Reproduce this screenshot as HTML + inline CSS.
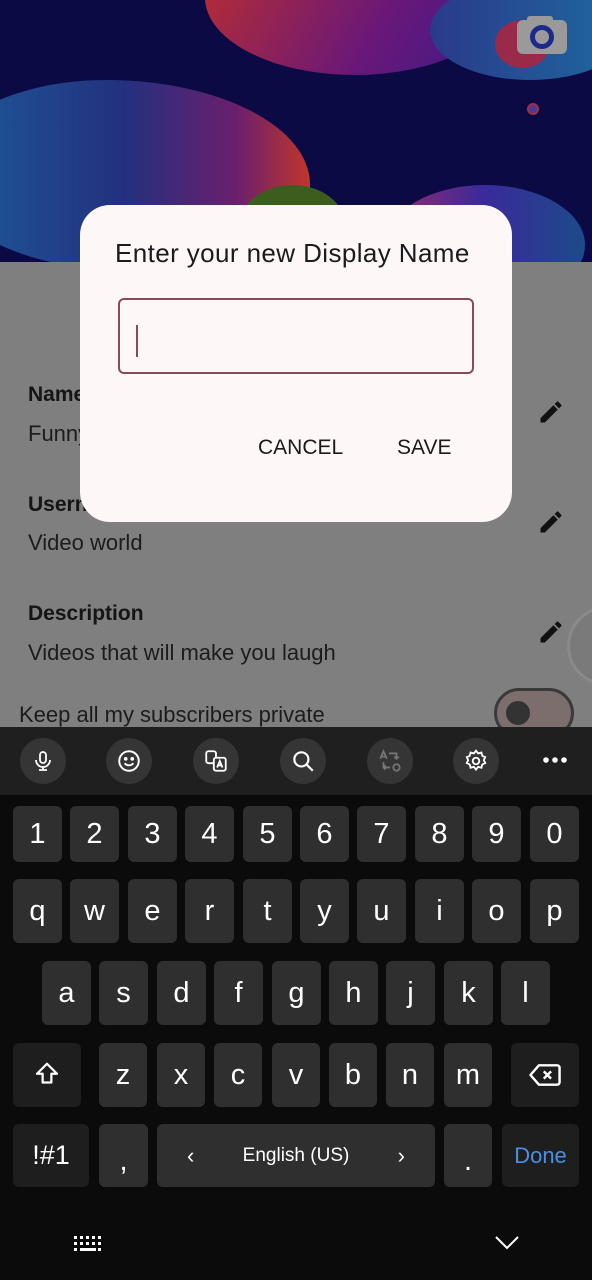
<!DOCTYPE html>
<html><head><meta charset="utf-8"><style>
*{margin:0;padding:0;box-sizing:border-box}
body{width:592px;height:1280px;position:relative;overflow:hidden;background:#7f7f7f;font-family:"Liberation Sans",Roboto,sans-serif}
.a{position:absolute}
.lbl{position:absolute;left:28px;font-size:21px;color:#151515;font-weight:bold}
.val{position:absolute;left:28px;font-size:22px;color:#1c1c1c}
.k{position:absolute;background:#2f2f2f;border-radius:6px;color:#fff;font-size:29px;display:flex;align-items:center;justify-content:center;height:56px}
.f{background:#1e1e1e}
.tb{position:absolute;top:738px;width:46px;height:46px;border-radius:50%;background:#353535;display:flex;align-items:center;justify-content:center}
</style></head><body>
<div class="a" style="left:0;top:0;width:592px;height:262px;background:#0b0a45;overflow:hidden">
 <div class="a" style="left:-60px;top:80px;width:370px;height:190px;border-radius:45% 55% 40% 50%;background:linear-gradient(90deg,#1d5c9a,#23307e 50%,#6a1f6e 80%,#c0362a)"></div>
 <div class="a" style="left:205px;top:-60px;width:120px;height:90px;border-radius:50%;background:linear-gradient(90deg,#2a5a8a,#b03040)"></div>
 <div class="a" style="left:205px;top:-80px;width:300px;height:155px;border-radius:50%;background:linear-gradient(120deg,#c0302a,#6a1878 60%,#3a1a8a)"></div>
 <div class="a" style="left:430px;top:-20px;width:200px;height:100px;border-radius:50%;background:linear-gradient(90deg,#2a3a8a,#1d6aa0)"></div>
 <div class="a" style="left:495px;top:20px;width:55px;height:48px;border-radius:50%;background:#9a2a4a"></div>
 <div class="a" style="left:240px;top:185px;width:105px;height:80px;border-radius:50%;background:#3b5e1e"></div>
 <div class="a" style="left:385px;top:185px;width:200px;height:120px;border-radius:50%;background:linear-gradient(90deg,#9a2a6a,#3a2a9a,#1d4a8a)"></div>
 <div class="a" style="left:527px;top:103px;width:12px;height:12px;border-radius:50%;background:#4a3a9a;border:2px solid #a03040"></div>
 <div class="a" style="left:517px;top:20px;width:50px;height:34px;border-radius:6px;background:#9a9a9a"></div>
 <div class="a" style="left:527px;top:16px;width:26px;height:8px;border-radius:3px;background:#9a9a9a"></div>
 <div class="a" style="left:530px;top:25px;width:24px;height:24px;border-radius:50%;border:5px solid #1e2a8a;background:#9a9a9a"></div>
</div>
<div class="lbl" style="top:383px">Name</div><div class="val" style="top:421px">Funny</div>
<div class="lbl" style="top:493px">Username</div><div class="val" style="top:530px">Video world</div>
<div class="lbl" style="top:602px">Description</div><div class="val" style="top:640px">Videos that will make you laugh</div>
<div class="val" style="left:19px;top:702px">Keep all my subscribers private</div>
<svg class="a" style="left:537px;top:398px" width="28" height="28" viewBox="0 0 24 24"><path fill="#111" d="M3 17.25V21h3.75L17.8 9.94l-3.75-3.75L3 17.25zM20.7 7.04a1 1 0 000-1.41l-2.34-2.34a1 1 0 00-1.41 0l-1.83 1.83 3.75 3.75 1.83-1.83z"/></svg>
<svg class="a" style="left:537px;top:508px" width="28" height="28" viewBox="0 0 24 24"><path fill="#111" d="M3 17.25V21h3.75L17.8 9.94l-3.75-3.75L3 17.25zM20.7 7.04a1 1 0 000-1.41l-2.34-2.34a1 1 0 00-1.41 0l-1.83 1.83 3.75 3.75 1.83-1.83z"/></svg>
<svg class="a" style="left:537px;top:618px" width="28" height="28" viewBox="0 0 24 24"><path fill="#111" d="M3 17.25V21h3.75L17.8 9.94l-3.75-3.75L3 17.25zM20.7 7.04a1 1 0 000-1.41l-2.34-2.34a1 1 0 00-1.41 0l-1.83 1.83 3.75 3.75 1.83-1.83z"/></svg>
<div class="a" style="left:567px;top:606px;width:80px;height:80px;border-radius:50%;background:#7a7a7a;border:3px solid #8a8a8a"></div>
<div class="a" style="left:494px;top:688px;width:80px;height:50px;border-radius:25px;background:#7d6e6e;border:3px solid #3a3a3a"></div>
<div class="a" style="left:506px;top:701px;width:24px;height:24px;border-radius:50%;background:#333"></div>

<div class="a" style="left:80px;top:205px;width:432px;height:317px;border-radius:30px;background:#fdf7f7">
 <div class="a" style="left:35px;top:33px;font-size:26px;letter-spacing:0.4px;color:#1b1b1b;white-space:nowrap">Enter your new Display Name</div>
 <div class="a" style="left:38px;top:93px;width:356px;height:76px;border:2.5px solid #8b4a5a;border-radius:6px"></div>
 <div class="a" style="left:56px;top:120px;width:2px;height:32px;background:#8b4a5a"></div>
 <div class="a" style="left:178px;top:231px;font-size:21px;color:#1b1b1b">CANCEL</div>
 <div class="a" style="left:317px;top:231px;font-size:21px;color:#1b1b1b">SAVE</div>
</div>

<div class="a" style="left:0;top:727px;width:592px;height:68px;background:#1f1f1f"></div>
<div class="a" style="left:0;top:795px;width:592px;height:485px;background:#0b0b0b"></div>
<div class="tb" style="left:20px"><svg width="24" height="24" viewBox="0 0 24 24" fill="none" stroke="#fff" stroke-width="1.8"><rect x="9" y="3" width="6" height="11" rx="3"/><path d="M5 11a7 7 0 0014 0M12 18v3M8 21h8"/></svg></div>
<div class="tb" style="left:106px"><svg width="26" height="26" viewBox="0 0 24 24" fill="none" stroke="#fff" stroke-width="1.8"><circle cx="12" cy="12" r="9"/><circle cx="9" cy="10" r=".8" fill="#fff"/><circle cx="15" cy="10" r=".8" fill="#fff"/><path d="M8 14a5 5 0 008 0"/></svg></div>
<div class="tb" style="left:193px"><svg width="26" height="26" viewBox="0 0 24 24" fill="none" stroke="#fff" stroke-width="1.7"><rect x="3" y="3" width="9" height="11" rx="2"/><rect x="10" y="9" width="11" height="12" rx="2" fill="#353535"/><path d="M13 18l2.5-6 2.5 6M14 16h3"/></svg></div>
<div class="tb" style="left:280px"><svg width="26" height="26" viewBox="0 0 24 24" fill="none" stroke="#fff" stroke-width="2"><circle cx="10.5" cy="10.5" r="6.5"/><path d="M15.5 15.5L21 21"/></svg></div>
<div class="tb" style="left:367px"><svg width="26" height="26" viewBox="0 0 24 24" fill="none" stroke="#777" stroke-width="1.6"><path d="M3 10l3-7 3 7M4 8h4M11 5h7v5M16 8l2 2 2-2M6 13v5h6M8 16l-2 2 2 2"/><circle cx="18" cy="18" r="3"/></svg></div>
<div class="tb" style="left:453px"><svg width="26" height="26" viewBox="0 0 24 24" fill="none" stroke="#fff" stroke-width="1.7"><circle cx="12" cy="12" r="3"/><path d="M12 2.5l2 2.5 3-.8.8 3 2.7 1.3-1.3 2.7 1.3 2.7-2.7 1.3-.8 3-3-.8-2 2.5-2-2.5-3 .8-.8-3-2.7-1.3 1.3-2.7-1.3-2.7 2.7-1.3.8-3 3 .8z"/></svg></div>
<svg class="a" style="left:542px;top:756px" width="26" height="8" viewBox="0 0 26 8" fill="#fff"><circle cx="4" cy="4" r="2.8"/><circle cx="13" cy="4" r="2.8"/><circle cx="22" cy="4" r="2.8"/></svg>

<div class="k" style="left:13px;top:806px;width:49px">1</div><div class="k" style="left:70px;top:806px;width:49px">2</div><div class="k" style="left:128px;top:806px;width:49px">3</div><div class="k" style="left:185px;top:806px;width:49px">4</div><div class="k" style="left:243px;top:806px;width:49px">5</div><div class="k" style="left:300px;top:806px;width:49px">6</div><div class="k" style="left:357px;top:806px;width:49px">7</div><div class="k" style="left:415px;top:806px;width:49px">8</div><div class="k" style="left:472px;top:806px;width:49px">9</div><div class="k" style="left:530px;top:806px;width:49px">0</div>
<div class="k" style="left:13px;top:879px;width:49px;height:64px">q</div><div class="k" style="left:70px;top:879px;width:49px;height:64px">w</div><div class="k" style="left:128px;top:879px;width:49px;height:64px">e</div><div class="k" style="left:185px;top:879px;width:49px;height:64px">r</div><div class="k" style="left:243px;top:879px;width:49px;height:64px">t</div><div class="k" style="left:300px;top:879px;width:49px;height:64px">y</div><div class="k" style="left:357px;top:879px;width:49px;height:64px">u</div><div class="k" style="left:415px;top:879px;width:49px;height:64px">i</div><div class="k" style="left:472px;top:879px;width:49px;height:64px">o</div><div class="k" style="left:530px;top:879px;width:49px;height:64px">p</div>
<div class="k" style="left:42px;top:961px;width:49px;height:64px">a</div><div class="k" style="left:99px;top:961px;width:49px;height:64px">s</div><div class="k" style="left:157px;top:961px;width:49px;height:64px">d</div><div class="k" style="left:214px;top:961px;width:49px;height:64px">f</div><div class="k" style="left:272px;top:961px;width:49px;height:64px">g</div><div class="k" style="left:329px;top:961px;width:49px;height:64px">h</div><div class="k" style="left:386px;top:961px;width:49px;height:64px">j</div><div class="k" style="left:444px;top:961px;width:49px;height:64px">k</div><div class="k" style="left:501px;top:961px;width:49px;height:64px">l</div>
<div class="k f" style="left:13px;top:1043px;width:68px;height:64px"><svg width="30" height="30" viewBox="0 0 24 24" fill="none" stroke="#fff" stroke-width="1.8" stroke-linejoin="round"><path d="M12 3l8 8h-4.5v7h-7v-7H4z"/></svg></div>
<div class="k" style="left:99px;top:1043px;width:48px;height:64px">z</div><div class="k" style="left:157px;top:1043px;width:48px;height:64px">x</div><div class="k" style="left:214px;top:1043px;width:48px;height:64px">c</div><div class="k" style="left:272px;top:1043px;width:48px;height:64px">v</div><div class="k" style="left:329px;top:1043px;width:48px;height:64px">b</div><div class="k" style="left:386px;top:1043px;width:48px;height:64px">n</div><div class="k" style="left:444px;top:1043px;width:48px;height:64px">m</div>
<div class="k f" style="left:511px;top:1043px;width:68px;height:64px"><svg width="34" height="28" viewBox="0 0 28 22" fill="none" stroke="#fff" stroke-width="2" stroke-linejoin="round"><path d="M9 3h15a2 2 0 012 2v12a2 2 0 01-2 2H9l-7-8z"/><path d="M13 8l6 6M19 8l-6 6"/></svg></div>
<div class="k f" style="left:13px;top:1124px;width:76px;height:63px;font-size:27px">!#1</div>
<div class="k" style="left:99px;top:1124px;width:49px;height:63px;padding-top:12px">,</div>
<div class="k" style="left:157px;top:1124px;width:278px;height:63px;font-size:19px;justify-content:space-between;padding:0 30px"><span style="font-size:22px">‹</span><span>English (US)</span><span style="font-size:22px">›</span></div>
<div class="k" style="left:444px;top:1124px;width:48px;height:63px;padding-top:12px">.</div>
<div class="k f" style="left:502px;top:1124px;width:77px;height:63px;font-size:22px;color:#4d8fe0">Done</div>
<svg class="a" style="left:73px;top:1235px" width="30" height="18" viewBox="0 0 30 18" fill="#fff"><g><rect x="1" y="1" width="3" height="3"/><rect x="7" y="1" width="3" height="3"/><rect x="13" y="1" width="3" height="3"/><rect x="19" y="1" width="3" height="3"/><rect x="25" y="1" width="3" height="3"/><rect x="1" y="7" width="3" height="3"/><rect x="7" y="7" width="3" height="3"/><rect x="13" y="7" width="3" height="3"/><rect x="19" y="7" width="3" height="3"/><rect x="25" y="7" width="3" height="3"/><rect x="1" y="13" width="3" height="3"/><rect x="7" y="13" width="16" height="3"/><rect x="25" y="13" width="3" height="3"/></g></svg>
<svg class="a" style="left:494px;top:1234px" width="26" height="18" viewBox="0 0 26 18" fill="none" stroke="#fff" stroke-width="2"><path d="M2 3l11 11L24 3"/></svg>
</body></html>
